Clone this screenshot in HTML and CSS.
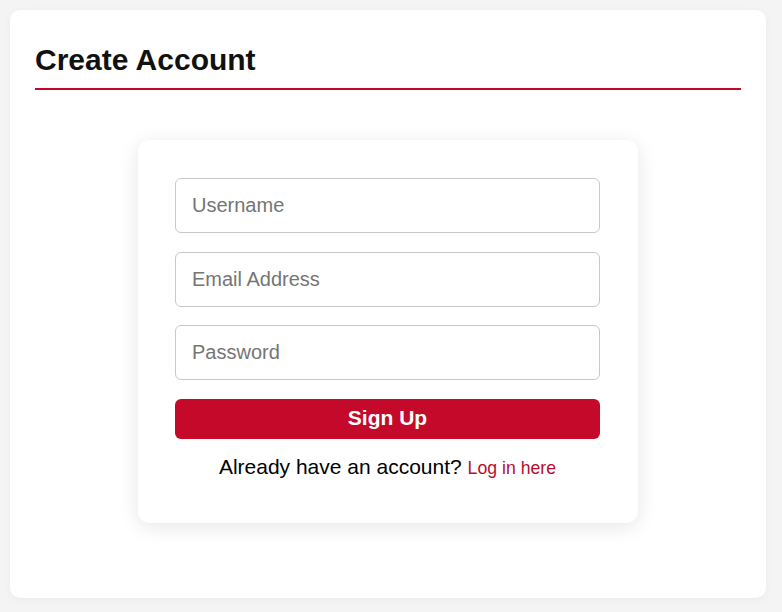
FILE: index.html
```html
<!DOCTYPE html>
<html lang="en">
<head>
<meta charset="utf-8">
<title>Create Account</title>
<link rel="stylesheet" href="styles.css">
</head>
<body>
<main class="panel">
  <h1 class="title">Create Account</h1>
  <form class="signup-card">
    <input class="field" type="text" placeholder="Username">
    <input class="field" type="email" placeholder="Email Address">
    <input class="field" type="password" placeholder="Password">
    <button class="submit" type="button">Sign Up</button>
    <p class="login-note">Already have an account? <a class="login-link" href="#">Log in here</a></p>
  </form>
</main>
</body>
</html>
```
FILE: styles.css
```css
* { box-sizing: border-box; }
html, body { margin: 0; }
body {
  background: #f4f4f4;
  padding: 10px 16px 14px 10px;
  font-family: "Liberation Sans", Arial, sans-serif;
  color: #111;
}
.panel {
  background: #fff;
  border-radius: 10px;
  height: 588px;
  padding: 25px;
  box-shadow: 0 2px 8px rgba(0,0,0,0.04);
}
.title {
  margin: 8px 0 0;
  font-size: 30px;
  font-weight: bold;
  line-height: 34px;
  padding-bottom: 11px;
  border-bottom: 2px solid #c0092a;
  color: #111;
}
.signup-card {
  width: 500px;
  margin: 50px auto 0;
  background: #fff;
  border-radius: 12px;
  padding: 38px 38px 43px 37px;
  box-shadow: 0 4px 20px rgba(0,0,0,0.1);
  display: flex;
  flex-direction: column;
  gap: 18.7px;
}
.field {
  height: 55px;
  border: 1px solid #c8c8c8;
  border-radius: 6px;
  padding: 0 16px;
  font-family: inherit;
  font-size: 20px;
  color: #333;
  outline: none;
}
.field::placeholder { color: #757575; }
.submit {
  height: 40px;
  border: none;
  border-radius: 6px;
  background: #c4092a;
  color: #fff;
  font-family: inherit;
  font-size: 21px;
  font-weight: bold;
  padding: 0 0 2px;
}
.login-note {
  margin: -3px 0 0;
  text-align: center;
  font-size: 21px;
  line-height: 24px;
  color: #000;
}
.login-link {
  color: #b70d30;
  font-size: 17.7px;
  text-decoration: none;
}
```
